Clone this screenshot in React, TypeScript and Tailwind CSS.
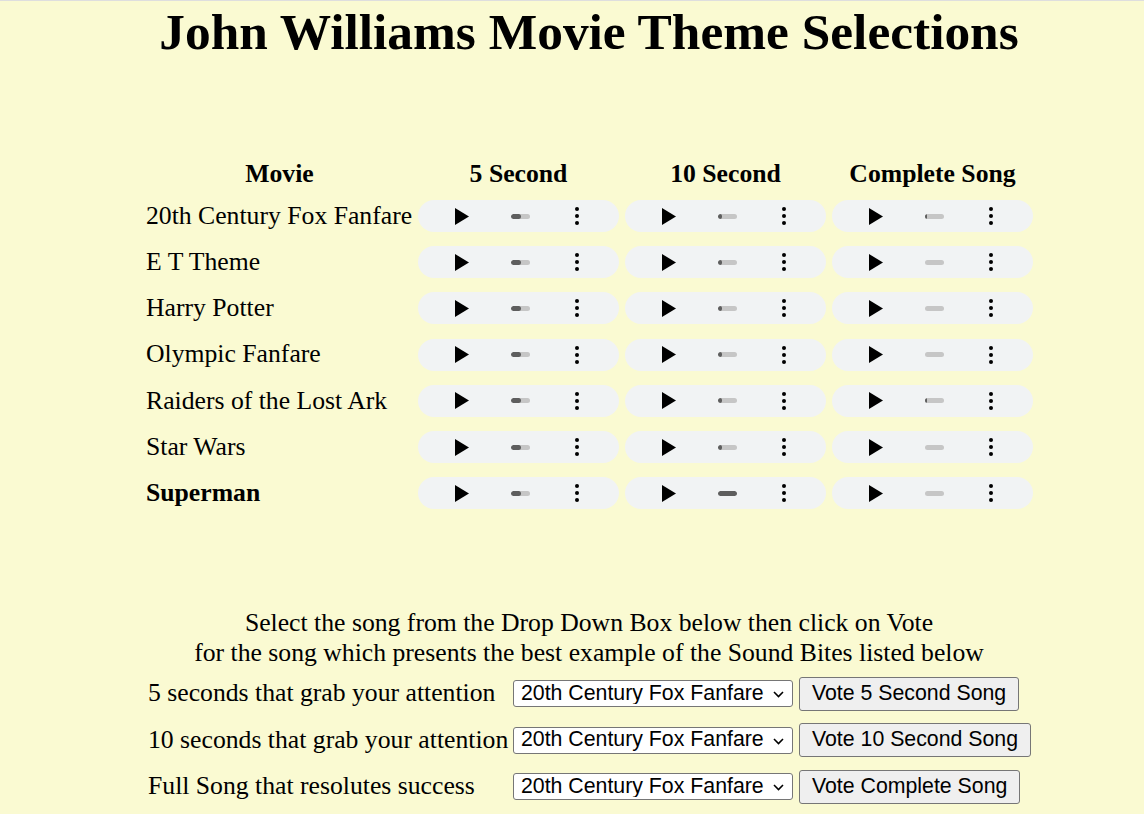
import { useState } from "react";

type Row = { title: string; progress: [number, number, number]; bold?: boolean };

const rows: Row[] = [
    { title: "20th Century Fox Fanfare", progress: [52, 22, 12] },
    { title: "E T Theme", progress: [52, 22, 0] },
    { title: "Harry Potter", progress: [52, 22, 0] },
    { title: "Olympic Fanfare", progress: [52, 22, 0] },
    { title: "Raiders of the Lost Ark", progress: [52, 22, 12] },
    { title: "Star Wars", progress: [52, 22, 0] },
    { title: "Superman", progress: [52, 100, 0], bold: true },
];

const songs = rows.map((r) => r.title);

// fake audio element, styled like chrome's compact player
function Player({ progress }: { progress: number }) {
    return (
        <div className="w-[201px] h-[32px] rounded-full bg-[#f1f3f4] flex items-center">
            <svg width="14" height="17" viewBox="0 0 14 17" className="ml-[37px]">
                <path d="M0 0 L14 8.5 L0 17 Z" fill="#000" />
            </svg>
            <div className="ml-[42px] w-[19px] h-[5px] rounded-full bg-[#c6c6c6] overflow-hidden">
                <div className="h-full bg-[#5e5e5e] rounded-full" style={{ width: `${progress}%` }} />
            </div>
            <div className="ml-[45px] flex flex-col gap-[3px]">
                <span className="w-[4px] h-[4px] rounded-full bg-black" />
                <span className="w-[4px] h-[4px] rounded-full bg-black" />
                <span className="w-[4px] h-[4px] rounded-full bg-black" />
            </div>
        </div>
    );
}

function VoteRow({ label, button }: { label: string; button: string }) {
    const [value, setValue] = useState(songs[0]);
    return (
        <div className="h-[46.5px] flex items-center">
            <span className="w-[367px] pl-[2px] text-[25.7px]">{label}</span>

            <div className="relative">
                <select
                    value={value}
                    onChange={(e) => setValue(e.target.value)}
                    className="appearance-none block w-[280px] h-[27px] bg-white border border-[#767676] rounded-[3px] text-[21.3px] text-black font-['Liberation_Sans',Arial,sans-serif] leading-none pl-[7px] pr-[22px]"
                >
                    {songs.map((s) => (
                        <option key={s}>{s}</option>
                    ))}
                </select>
                {/* chevron */}
                <svg width="11" height="7" viewBox="0 0 11 7" className="absolute right-[9px] top-[11px] pointer-events-none">
                    <path d="M1 1 L5.5 5.5 L10 1" fill="none" stroke="#000" strokeWidth="1.6" />
                </svg>
            </div>

            <button className="ml-[6px] h-[34px] px-[12px] bg-[#efefef] border border-[#767676] rounded-[3px] text-[21.3px] text-black font-['Liberation_Sans',Arial,sans-serif]">
                {button}
            </button>
        </div>
    );
}

export default function App() {
    return (
        <div className="min-h-[814px] bg-[#fafad2] border-t border-[#dedede] text-black font-['Liberation_Serif','Times_New_Roman',serif]">
            <div className="ml-[146px] w-[886px] flex flex-col">

                <h1 className="text-center text-[51.4px] font-bold leading-[56px] mt-[3px]">
                    John Williams Movie Theme Selections
                </h1>

                {/* Movie table */}
                <div className="mt-[95px] grid grid-cols-[272px_207px_207px_201px]">
                    <div className="h-[38px] flex items-center justify-center text-[25.7px] font-bold pr-[5px]">Movie</div>
                    <div className="h-[38px] flex items-center justify-center text-[25.7px] font-bold pr-[6px]">5 Second</div>
                    <div className="h-[38px] flex items-center justify-center text-[25.7px] font-bold pr-[6px]">10 Second</div>
                    <div className="h-[38px] flex items-center justify-center text-[25.7px] font-bold">Complete Song</div>

                    {rows.map((r) => (
                        <div key={r.title} className="contents">
                            <div className={`h-[46.2px] flex items-center text-[25.7px] whitespace-nowrap ${r.bold ? "font-bold" : ""}`}>
                                {r.title}
                            </div>
                            <div className="h-[46.2px] flex items-center">
                                <Player progress={r.progress[0]} />
                            </div>
                            <div className="h-[46.2px] flex items-center">
                                <Player progress={r.progress[1]} />
                            </div>
                            <div className="h-[46.2px] flex items-center">
                                <Player progress={r.progress[2]} />
                            </div>
                        </div>
                    ))}
                </div>

                {/* Voting */}
                <div className="mt-[92px] text-center text-[25.7px] leading-[30px]">
                    <p>Select the song from the Drop Down Box below then click on Vote</p>
                    <p>for the song which presents the best example of the Sound Bites listed below</p>
                </div>

                <div className="mt-[2px] flex flex-col">
                    <VoteRow label="5 seconds that grab your attention" button="Vote 5 Second Song" />
                    <VoteRow label="10 seconds that grab your attention" button="Vote 10 Second Song" />
                    <VoteRow label="Full Song that resolutes success" button="Vote Complete Song" />
                </div>

            </div>
        </div>
    );
}
